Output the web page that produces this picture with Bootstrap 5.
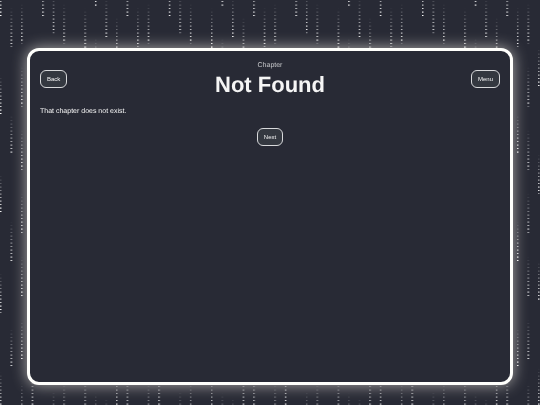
<!DOCTYPE html>
<html lang="en">
<head>
<meta charset="utf-8">
<meta name="viewport" content="width=device-width, initial-scale=1">
<title>Not Found</title>
<link href="https://cdn.jsdelivr.net/npm/bootstrap@5.3.0/dist/css/bootstrap.min.css" rel="stylesheet">
<style>
  body { background: #282a35; color: #f5f5f5; font: 7px/10px "Liberation Sans", Arial, sans-serif; text-rendering: geometricPrecision; }
  .rain { z-index: -1; }
  .page { padding: 48px 5vw 20px; }
  .panel { background: #282a35; border: 3px solid #fffffc; border-radius: 12px; padding: 8px 10px; box-shadow: 0 0 15px #fffaf0a0; }
  .bar-side { flex: 1 1 0; }
  .eyebrow { color: #c4c5c8; padding-top: 2px; }
  .title { font-size: 22px; line-height: 28px; font-weight: 700; }
  .pill { display: inline-block; vertical-align: top; background: #343840; color: #f5f5f5; border: 1px solid #d8d9db; border-radius: 6px; font-size: 6px; line-height: 10px; padding: 3px 6px; }
  .pill:hover, .pill:focus-visible { background: #474b55; color: #fff; border-color: #fff; }
  .chapter-text { margin: 8px 0 11px; }
</style>
</head>
<body>
<svg class="rain position-fixed top-0 start-0 w-100 h-100" aria-hidden="true">
  <defs id="drops">
    <linearGradient id="fade" x1="0" y1="0" x2="0" y2="1">
      <stop offset="0" stop-color="#fff" stop-opacity="0"/>
      <stop offset=".5" stop-color="#fff" stop-opacity=".5"/>
      <stop offset="1" stop-color="#fff"/>
    </linearGradient>
    <pattern id="dots" width="20" height="7" patternUnits="userSpaceOnUse">
      <rect y="1" width="20" height="1" fill="#fff"/>
      <rect y="4.5" width="20" height="1.2" fill="#fff"/>
    </pattern>
    <mask id="dotted"><rect width="100%" height="100%" fill="url(#dots)"/></mask>
  </defs>
  <g id="layers" mask="url(#dotted)"></g>
</svg>

<div class="page min-vh-100 d-flex flex-column">
  <main class="panel flex-grow-1">
    <header class="d-flex align-items-center">
      <div class="bar-side"><button type="button" class="btn pill">Back</button></div>
      <div class="text-center">
        <div class="eyebrow">Chapter</div>
        <h1 class="title m-0">Not Found</h1>
      </div>
      <div class="bar-side text-end"><button type="button" class="btn pill">Menu</button></div>
    </header>
    <p class="chapter-text">That chapter does not exist.</p>
    <div class="text-center"><button type="button" class="btn pill">Next</button></div>
  </main>
</div>

<script>
  // Falling streaks: [column, lower end of a streak, vertical repeat]
  const streaks = [[0, 16, 99], [1, 47, 107], [2, 43, 63.3], [3, 87, 107], [4, 16, 88], [5, 33, 99.5],
    [6, 43, 63.2], [8, 48, 92], [9, 78, 71], [10, 37, 100], [11, 57, 118]];
  const NS = 'http://www.w3.org/2000/svg', step = 10.55, length = 40;
  function add(parent, name, attrs) {
    const el = document.createElementNS(NS, name);
    for (const key in attrs) el.setAttribute(key, attrs[key]);
    return parent.appendChild(el);
  }
  const drops = document.getElementById('drops'), layers = document.getElementById('layers');
  for (const [column, end, repeat] of streaks) {
    const id = 'streak' + column;
    const tile = add(drops, 'pattern', { id, x: column * step, y: end - length, width: step * 12, height: repeat, patternUnits: 'userSpaceOnUse' });
    add(tile, 'rect', { width: 1.5, height: length, fill: 'url(#fade)' });
    add(layers, 'rect', { width: '100%', height: '100%', fill: `url(#${id})` });
  }
</script>
<script src="https://cdn.jsdelivr.net/npm/bootstrap@5.3.0/dist/js/bootstrap.bundle.min.js"></script>
</body>
</html>
